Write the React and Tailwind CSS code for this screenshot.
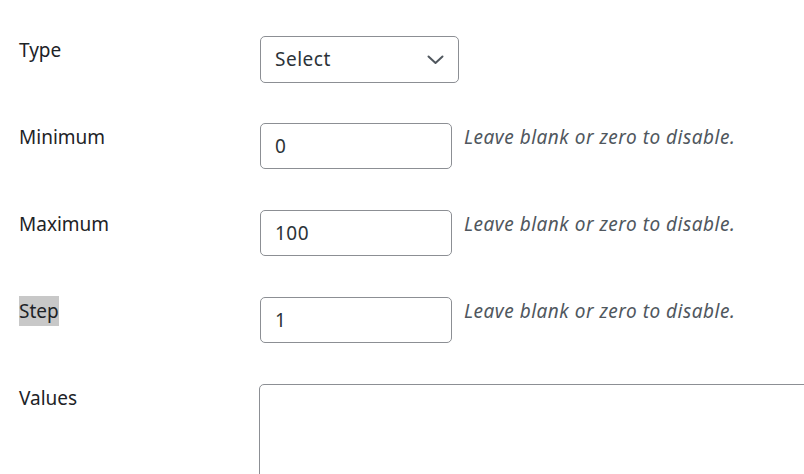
import React from "react";

const font = { fontFamily: '"Noto Sans", "Open Sans", sans-serif' };

function Label({ children, highlight }) {
  return (
    <div className="w-[241px] shrink-0 pt-[1px] text-[19px] leading-[26px] text-[#1d2327]">
      <span className={highlight ? "bg-[#c8c8c8] py-[2px]" : ""}>{children}</span>
    </div>
  );
}

function NumRow({ label, value, highlight }) {
  return (
    <div className="flex h-[87px] items-start">
      <Label highlight={highlight}>{label}</Label>
      <div className="flex h-[46px] w-[192px] shrink-0 items-center rounded-[5px] border border-[#8c8f94] bg-white pl-[14px] text-[19px] tracking-[0.5px] text-[#2c3338]">
        {value}
      </div>
      <div className="pl-[12px] pt-[1px] text-[19px] italic leading-[26px] tracking-[0.5px] text-[#50575e]">
        Leave blank or zero to disable.
      </div>
    </div>
  );
}

export default function App() {
  return (
    <div style={font} className="h-[474px] w-[804px] overflow-hidden bg-white pl-[19px] pt-[36px]">
      <div className="flex h-[87px] items-start">
        <Label>Type</Label>
        <div className="flex h-[47px] w-[199px] shrink-0 items-center justify-between rounded-[5px] border border-[#8c8f94] bg-white pl-[14px] pr-[14px] text-[19px] tracking-[0.5px] text-[#2c3338]">
          <span>Select</span>
          <svg width="17" height="10" viewBox="0 0 17 10" fill="none">
            <path d="M1.5 1.5 L8.5 8 L15.5 1.5" stroke="#50575e" strokeWidth="2" strokeLinecap="round" strokeLinejoin="round" />
          </svg>
        </div>
      </div>
      <NumRow label="Minimum" value="0" />
      <NumRow label="Maximum" value="100" />
      <NumRow label="Step" value="1" highlight />
      <div className="flex items-start">
        <Label>Values</Label>
        <div className="-ml-[1px] h-[200px] w-[700px] shrink-0 rounded-[5px] border border-[#8c8f94] bg-white" />
      </div>
    </div>
  );
}
